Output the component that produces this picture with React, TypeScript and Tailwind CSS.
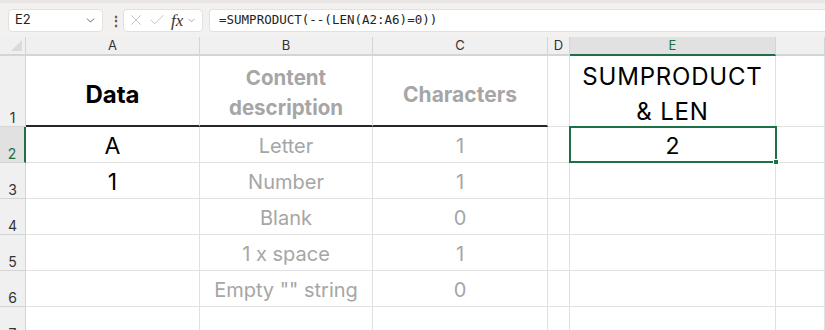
import { ChevronDown, Check, X } from "lucide-react";

const cols = ["A", "B", "C", "D", "E", ""];

const rows: { h: string; cells: (string | null)[] }[] = [
  { h: "1", cells: ["Data", "Content description", "Characters", null, "SUMPRODUCT\n& LEN", null] },
  { h: "2", cells: ["A", "Letter", "1", null, "2", null] },
  { h: "3", cells: ["1", "Number", "1", null, null, null] },
  { h: "4", cells: [null, "Blank", "0", null, null, null] },
  { h: "5", cells: [null, "1 x space", "1", null, null, null] },
  { h: "6", cells: [null, 'Empty "" string', "0", null, null, null] },
  { h: "7", cells: [null, null, null, null, null, null] },
];

function cellClass(r: number, c: number) {
  if (r === 0) {
    if (c === 0) return "font-bold text-black text-[24px] pt-[8px]";
    if (c === 1) return "font-bold text-[#a6a6a6] text-[20.5px] leading-[30px] pt-[5px]";
    if (c === 2) return "font-bold text-[#a6a6a6] text-[21px] pt-[8px]";
    if (c === 4) return "text-black text-[24px] tracking-[0.8px] leading-[35px] whitespace-pre-line pt-[5px]";
  }
  if (c === 0 || c === 4) return "text-black text-[23px] pt-[3px]";
  return "text-[#a6a6a6] text-[20px] pt-[3px]";
}

export default function App() {
  return (
    <div className="w-[825px] h-[330px] overflow-hidden bg-white" style={{ fontFamily: "Inter, 'Noto Sans', sans-serif" }}>
      {/* Formula bar */}
      <div className="h-[37px] bg-[#f3f1f0] border-t-[3px] border-[#e9e6e5] flex items-center pl-2 gap-[6px]">
        <div className="w-[95px] h-[23px] bg-white border border-[#e3e0df] rounded-[4px] flex items-center justify-between pl-[6px] pr-[5px] text-[13px] text-[#222]">
          <span>E2</span>
          <ChevronDown size={13} strokeWidth={1.5} className="text-[#444]" />
        </div>
        <span className="text-[#555] text-[14px] font-bold w-[8px] text-center">⋮</span>
        <div className="w-[80px] h-[23px] bg-white border border-[#e3e0df] rounded-[4px] flex items-center pl-[3px] gap-[3px] text-[#b8b8b8]">
          <X size={18} strokeWidth={1.1} />
          <Check size={18} strokeWidth={1.1} />
          <span className="text-[#333] text-[17px] italic ml-[2px] leading-none" style={{ fontFamily: "'Liberation Serif', serif" }}>fx</span>
          <ChevronDown size={11} strokeWidth={1.5} className="text-[#888]" />
        </div>
        <div className="flex-1 h-[23px] bg-white border border-[#e3e0df] rounded-l-[4px] border-r-0 flex items-center pl-[9px] text-[12.5px] text-[#222]" style={{ fontFamily: "'DejaVu Sans Mono', monospace" }}>
          =SUMPRODUCT(--(LEN(A2:A6)=0))
        </div>
      </div>

      {/* Grid */}
      <div className="relative grid grid-cols-[26px_174px_173px_175px_22px_206px_1fr] grid-rows-[19px_71px_36px_36px_36px_36px_36px_36px] text-[13px]">
        {/* corner */}
        <div className="bg-[#f0f0f0] border-r border-b-2 border-[#d4d4d4] flex items-end justify-end pr-[3px] pb-[3px]">
          <div className="w-0 h-0 border-l-[11px] border-l-transparent border-b-[11px] border-b-[#dadada]" />
        </div>
        {cols.map((c, i) => (
          <div
            key={i}
            className={
              c === "E"
                ? "bg-[#e1e1e1] border-r border-[#d4d4d4] border-b-2 border-b-[#1e6f43] text-[#1e6f43] flex items-center justify-center"
                : "bg-[#f0f0f0] border-r border-b-2 border-[#d4d4d4] text-[#333] flex items-center justify-center"
            }
          >
            {c}
          </div>
        ))}

        {rows.map((row, r) => (
          <>
            <div
              key={`h${r}`}
              className={
                r === 1
                  ? "bg-[#e1e1e1] border-b border-[#d4d4d4] border-r-2 border-r-[#1e6f43] text-[#1e6f43] flex items-end justify-center leading-[16px] text-[14px]"
                  : "bg-[#f0f0f0] border-b border-r border-[#d4d4d4] text-[#333] flex items-end justify-center leading-[16px] text-[14px]"
              }
            >
              {row.h}
            </div>
            {row.cells.map((v, c) => (
              <div
                key={`c${r}-${c}`}
                className={`border-r border-[#e1e1e1] flex items-center justify-center text-center ${
                  r === 0 && c < 3 ? "border-b-2 border-b-[#262626]" : "border-b"
                } ${cellClass(r, c)}`}
              >
                {v}
              </div>
            ))}
          </>
        ))}

        {/* Selected cell E2 */}
        <div className="absolute left-[569px] top-[89px] w-[208px] h-[37px] border-2 border-[#1e7145] pointer-events-none">
          <div className="absolute -right-[4px] -bottom-[4px] w-[6px] h-[6px] bg-[#1e7145] border border-white" />
        </div>
      </div>
    </div>
  );
}
